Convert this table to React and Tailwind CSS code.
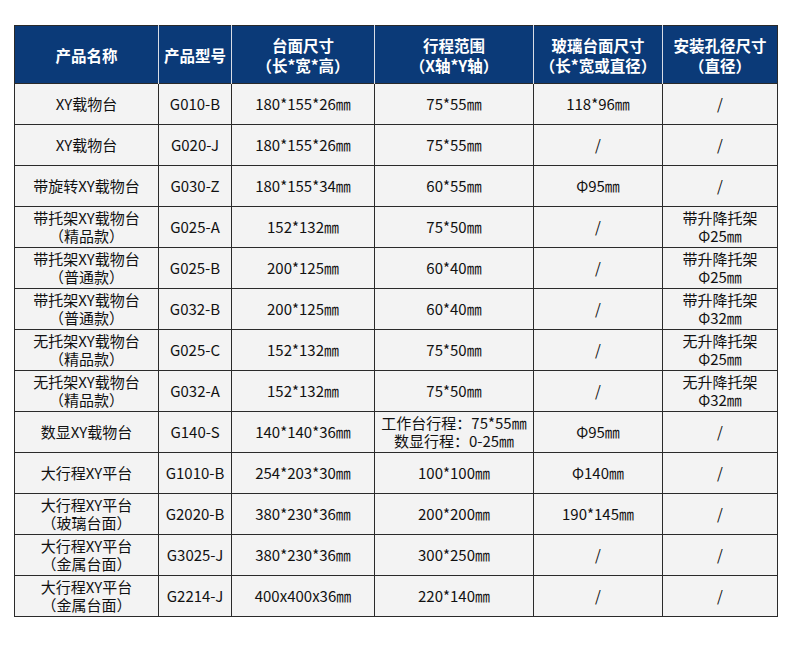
import React from "react";

const headers = [
  ["产品名称"],
  ["产品型号"],
  ["台面尺寸", "（长*宽*高）"],
  ["行程范围", "（X轴*Y轴）"],
  ["玻璃台面尺寸", "（长*宽或直径）"],
  ["安装孔径尺寸", "（直径）"],
];

const rows = [
  [["XY载物台"], "G010-B", "180*155*26㎜", ["75*55㎜"], "118*96㎜", ["/"]],
  [["XY载物台"], "G020-J", "180*155*26㎜", ["75*55㎜"], "/", ["/"]],
  [["带旋转XY载物台"], "G030-Z", "180*155*34㎜", ["60*55㎜"], "Φ95㎜", ["/"]],
  [["带托架XY载物台", "（精品款）"], "G025-A", "152*132㎜", ["75*50㎜"], "/", ["带升降托架", "Φ25㎜"]],
  [["带托架XY载物台", "（普通款）"], "G025-B", "200*125㎜", ["60*40㎜"], "/", ["带升降托架", "Φ25㎜"]],
  [["带托架XY载物台", "（普通款）"], "G032-B", "200*125㎜", ["60*40㎜"], "/", ["带升降托架", "Φ32㎜"]],
  [["无托架XY载物台", "（精品款）"], "G025-C", "152*132㎜", ["75*50㎜"], "/", ["无升降托架", "Φ25㎜"]],
  [["无托架XY载物台", "（精品款）"], "G032-A", "152*132㎜", ["75*50㎜"], "/", ["无升降托架", "Φ32㎜"]],
  [["数显XY载物台"], "G140-S", "140*140*36㎜", ["工作台行程：75*55㎜", "数显行程：0-25㎜"], "Φ95㎜", ["/"]],
  [["大行程XY平台"], "G1010-B", "254*203*30㎜", ["100*100㎜"], "Φ140㎜", ["/"]],
  [["大行程XY平台", "（玻璃台面）"], "G2020-B", "380*230*36㎜", ["200*200㎜"], "190*145㎜", ["/"]],
  [["大行程XY平台", "（金属台面）"], "G3025-J", "380*230*36㎜", ["300*250㎜"], "/", ["/"]],
  [["大行程XY平台", "（金属台面）"], "G2214-J", "400x400x36㎜", ["220*140㎜"], "/", ["/"]],
];

const widths = ["w-[144px]", "w-[73px]", "w-[143px]", "w-[159px]", "w-[129px]", "w-[115px]"];

const Lines = ({ lines }) => (
  <div className="flex flex-col items-center leading-[18px]">
    {lines.map((l, i) => (
      <span key={i} className="whitespace-nowrap">{l}</span>
    ))}
  </div>
);

export default function App() {
  return (
    <div
      className="w-[790px] h-[647px] bg-white pt-[25px] pl-[14px]"
      style={{ fontFamily: '"Noto Sans CJK SC", "Noto Sans", sans-serif' }}
    >
      <table className="border-collapse table-fixed border border-[#2a2a2a]">
        <thead>
          <tr className="h-[58px] bg-[#0b3a78] text-white font-bold text-[15.5px]">
            {headers.map((h, i) => (
              <th
                key={i}
                className={`${widths[i]} p-0 border-x border-[#d8dde6] first:border-l-[#2a2a2a] last:border-r-[#2a2a2a] font-bold`}
              >
                <div className="flex flex-col items-center leading-[20px]">
                  {h.map((l, j) => (
                    <span key={j} className="whitespace-nowrap">{l}</span>
                  ))}
                </div>
              </th>
            ))}
          </tr>
        </thead>
        <tbody className="bg-[#f3f3f3] text-[#111111] text-[15px]">
          {rows.map((r, i) => (
            <tr key={i} className="h-[41px]">
              <td className="p-0 border border-[#2a2a2a] text-center">
                <Lines lines={r[0]} />
              </td>
              <td className="p-0 border border-[#2a2a2a] text-center whitespace-nowrap">{r[1]}</td>
              <td className="p-0 border border-[#2a2a2a] text-center whitespace-nowrap">{r[2]}</td>
              <td className="p-0 border border-[#2a2a2a] text-center">
                <Lines lines={r[3]} />
              </td>
              <td className="p-0 border border-[#2a2a2a] text-center whitespace-nowrap">{r[4]}</td>
              <td className="p-0 border border-[#2a2a2a] text-center">
                <Lines lines={r[5]} />
              </td>
            </tr>
          ))}
        </tbody>
      </table>
    </div>
  );
}
